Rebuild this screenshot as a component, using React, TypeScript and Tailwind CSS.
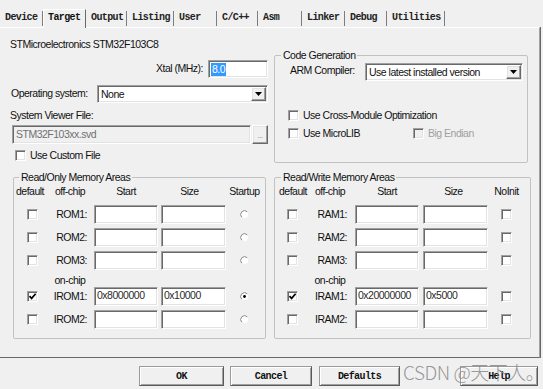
import React from "react";

const sunken =
  "border border-t-[#a0a0a0] border-l-[#a0a0a0] border-r-white border-b-white shadow-[inset_1px_1px_0_#696969,inset_-1px_-1px_0_#e3e3e3]";
const raised =
  "border border-t-white border-l-white border-r-[#696969] border-b-[#696969] shadow-[inset_-1px_-1px_0_#a0a0a0,inset_1px_1px_0_#e3e3e3]";

const tabs = [
  { label: "Device", w: "w-[43px]" },
  { label: "Target", w: "w-[43px]", active: true },
  { label: "Output", w: "w-[41px]" },
  { label: "Listing", w: "w-[47px]" },
  { label: "User", w: "w-[43px]" },
  { label: "C/C++", w: "w-[41px]" },
  { label: "Asm", w: "w-[44px]" },
  { label: "Linker", w: "w-[43px]" },
  { label: "Debug", w: "w-[42px]" },
  { label: "Utilities", w: "w-[58px]" },
];

function Check({ checked = false, disabled = false }: { checked?: boolean; disabled?: boolean }) {
  return (
    <div
      className={`w-[11px] h-[11px] shrink-0 flex items-center justify-center ${sunken} ${
        disabled ? "bg-[#f0f0f0]" : "bg-white"
      }`}
    >
      {checked && (
        <svg width="9" height="9" viewBox="0 0 9 9">
          <path d="M1.5 4.2 L3.6 6.4 L7.6 1.8" fill="none" stroke="#000" strokeWidth="1.7" />
        </svg>
      )}
    </div>
  );
}

function Radio({ checked = false }: { checked?: boolean }) {
  return (
    <svg width="9" height="9" viewBox="0 0 9 9">
      <circle cx="4.5" cy="4.5" r="3.6" fill="#fff" />
      <path d="M7.2 1.8 A3.8 3.8 0 0 0 1.8 7.2" fill="none" stroke="#8a8a8a" strokeWidth="1" />
      {checked && <circle cx="4.5" cy="4.5" r="1.4" fill="#000" />}
    </svg>
  );
}

function Field({ w, value }: { w: string; value?: string }) {
  return (
    <div className={`${w} h-[19px] bg-white ${sunken} pl-[2px] pt-[1px] leading-[13px] text-[#2a2a2a]`}>
      {value}
    </div>
  );
}

function Combo({ w, value }: { w: string; value: string }) {
  return (
    <div className={`${w} h-[18px] bg-white ${sunken} flex items-center`}>
      <span className="flex-1 pl-[3px] leading-[13px]">{value}</span>
      <div className={`w-[15px] h-[14px] mr-[1px] bg-[#f0f0f0] ${raised} flex items-center justify-center`}>
        <svg width="7" height="4" viewBox="0 0 7 4">
          <path d="M0 0 H7 L3.5 4 Z" fill="#000" />
        </svg>
      </div>
    </div>
  );
}

function Button({ label, cls }: { label: string; cls: string }) {
  return (
    <div
      className={`${cls} h-[20px] bg-[#f0f0f0] border border-t-[#9a9a9a] border-l-[#9a9a9a] border-r-[#5a5a5a] border-b-[#5a5a5a] shadow-[inset_1px_1px_0_#fff,inset_-1px_-1px_0_#a0a0a0] flex items-center justify-center font-['Liberation_Mono',monospace] text-[10px] font-bold tracking-[-0.6px] text-[#111]`}
    >
      {label}
    </div>
  );
}

const romRows = [
  { label: "ROM1:" },
  { label: "ROM2:" },
  { label: "ROM3:" },
];

export default function App() {
  return (
    <div className="relative w-[543px] h-[389px] overflow-hidden bg-[#f0f0f0] font-['Liberation_Sans',Arial,sans-serif] text-[10.5px] tracking-[-0.5px] text-[#111]">
      {/* tab strip */}
      <div className="flex items-end h-[27px]">
        {tabs.map((t) =>
          t.active ? (
            <div
              key={t.label}
              className={`${t.w} h-[19px] -mb-[1px] bg-[#f0f0f0] border-l border-l-white border-t border-t-white border-r border-r-[#696969] pl-[4px] pt-[1px] font-['Liberation_Mono',monospace] text-[10px] font-bold tracking-[-0.6px] leading-[14px] text-[#111]`}
            >
              {t.label}
            </div>
          ) : (
            <div
              key={t.label}
              className={`${t.w} h-[15px] mb-[1px] border-r border-r-[#7d7d7d] pl-[5px] font-['Liberation_Mono',monospace] text-[10px] font-bold tracking-[-0.6px] leading-[14px] text-[#222]`}
            >
              {t.label}
            </div>
          )
        )}
      </div>

      {/* panel */}
      <div className="w-[540px] h-[331px] border-t border-t-white border-r border-r-[#a0a0a0] border-b border-b-[#696969] shadow-[1px_0_0_#696969]">
        <div className="flex h-[143px]">
          <div className="w-[274px]">
            <div className="mt-[10px] pl-[10px] leading-[13px]">STMicroelectronics STM32F103C8</div>
            <div className="mt-[9px] flex items-center justify-end gap-[5px] w-[268px] h-[18px]">
              <span>Xtal (MHz):</span>
              <div className={`w-[60px] h-[18px] bg-white ${sunken} pl-[2px] flex items-center`}>
                <span className="bg-[#3399ff] text-white leading-[13px] px-[1px]">8.0</span>
              </div>
            </div>
            <div className="mt-[7px] flex items-center h-[18px]">
              <span className="w-[97px] pl-[11px]">Operating system:</span>
              <Combo w="w-[171px]" value="None" />
            </div>
            <div className="mt-[6px] pl-[10px] leading-[13px]">System Viewer File:</div>
            <div className="mt-[3px] flex pl-[12px] gap-[1px] h-[19px]">
              <div className={`w-[239px] h-[19px] bg-[#f0f0f0] ${sunken} pl-[3px] flex items-center text-[#707070]`}>
                STM32F103xx.svd
              </div>
              <div className={`w-[16px] h-[19px] ${raised} flex items-end justify-center pb-[3px] text-[8px] leading-[8px] text-[#8a8a8a]`}>
                ...
              </div>
            </div>
            <div className="mt-[5px] flex items-center pl-[15px] gap-[4px]">
              <Check />
              <span className="leading-[13px]">Use Custom File</span>
            </div>
          </div>

          <div className="w-[254px] pt-[21px]">
            <fieldset className="h-[114px] border border-[#c2c2c2] rounded-[2px]">
              <legend className="ml-[6px] px-[2px] leading-[12px]">Code Generation</legend>
              <div className="mt-[2px] flex items-center h-[18px]">
                <span className="w-[90px] pl-[15px] -mt-[2px]">ARM Compiler:</span>
                <Combo w="w-[158px]" value="Use latest installed version" />
              </div>
              <div className="mt-[27px] pl-[13px] flex items-center h-[15px] gap-[4px]">
                <Check />
                <span>Use Cross-Module Optimization</span>
              </div>
              <div className="mt-[3px] pl-[13px] flex items-center h-[15px]">
                <div className="w-[125px] flex items-center gap-[4px]">
                  <Check />
                  <span>Use MicroLIB</span>
                </div>
                <div className="flex items-center gap-[4px] text-[#a0a0a0]">
                  <Check disabled />
                  <span>Big Endian</span>
                </div>
              </div>
            </fieldset>
          </div>
        </div>

        <div className="flex">
          {/* Read/Only */}
          <fieldset className="ml-[13px] w-[253px] h-[168px] border border-[#c2c2c2] rounded-[2px]">
            <legend className="ml-[5px] px-[2px] leading-[12px]">Read/Only Memory Areas</legend>
            <div className="mt-[2px] flex leading-[13px]">
              <span className="w-[36px] pl-[2px]">default</span>
              <span className="w-[40px] text-center">off-chip</span>
              <span className="ml-[4px] w-[64px] text-center">Start</span>
              <span className="ml-[3px] w-[65px] text-center pr-[8px]">Size</span>
              <span className="w-[37px] text-center">Startup</span>
            </div>
            {romRows.map((r, i) => (
              <div key={r.label} className={`${i === 0 ? "mt-[7px]" : "mt-[4px]"} flex items-center h-[19px]`}>
                <div className="w-[36px] flex justify-center">
                  <Check />
                </div>
                <span className="w-[40px] text-right pr-[3px]">{r.label}</span>
                <div className="ml-[4px]">
                  <Field w="w-[64px]" />
                </div>
                <div className="ml-[3px]">
                  <Field w="w-[65px]" />
                </div>
                <div className="w-[37px] flex justify-center">
                  <Radio />
                </div>
              </div>
            ))}
            <div className="mt-[4px] flex leading-[13px]">
              <span className="w-[36px]" />
              <span className="w-[40px] text-center">on-chip</span>
            </div>
            <div className="flex items-center h-[19px]">
              <div className="w-[36px] flex justify-center">
                <Check checked />
              </div>
              <span className="w-[40px] text-right pr-[3px]">IROM1:</span>
              <div className="ml-[4px]">
                <Field w="w-[64px]" value="0x8000000" />
              </div>
              <div className="ml-[3px]">
                <Field w="w-[65px]" value="0x10000" />
              </div>
              <div className="w-[37px] flex justify-center">
                <Radio checked />
              </div>
            </div>
            <div className="mt-[4px] flex items-center h-[19px]">
              <div className="w-[36px] flex justify-center">
                <Check />
              </div>
              <span className="w-[40px] text-right pr-[3px]">IROM2:</span>
              <div className="ml-[4px]">
                <Field w="w-[64px]" />
              </div>
              <div className="ml-[3px]">
                <Field w="w-[65px]" />
              </div>
              <div className="w-[37px] flex justify-center">
                <Radio />
              </div>
            </div>
          </fieldset>

          {/* Read/Write */}
          <fieldset className="ml-[8px] w-[257px] h-[168px] border border-[#c2c2c2] rounded-[2px]">
            <legend className="ml-[6px] px-[2px] leading-[12px]">Read/Write Memory Areas</legend>
            <div className="mt-[2px] flex leading-[13px]">
              <span className="w-[35px] pl-[4px]">default</span>
              <span className="w-[40px] text-center">off-chip</span>
              <span className="ml-[5px] w-[64px] text-center">Start</span>
              <span className="ml-[4px] w-[65px] text-center pr-[4px]">Size</span>
              <span className="w-[37px] text-center">NoInit</span>
            </div>
            {["RAM1:", "RAM2:", "RAM3:"].map((label, i) => (
              <div key={label} className={`${i === 0 ? "mt-[7px]" : "mt-[4px]"} flex items-center h-[19px]`}>
                <div className="w-[35px] flex justify-center">
                  <Check />
                </div>
                <span className="w-[40px] text-right pr-[3px]">{label}</span>
                <div className="ml-[5px]">
                  <Field w="w-[64px]" />
                </div>
                <div className="ml-[4px]">
                  <Field w="w-[65px]" />
                </div>
                <div className="w-[37px] flex justify-center">
                  <Check />
                </div>
              </div>
            ))}
            <div className="mt-[4px] flex leading-[13px]">
              <span className="w-[35px]" />
              <span className="w-[40px] text-center">on-chip</span>
            </div>
            <div className="flex items-center h-[19px]">
              <div className="w-[35px] flex justify-center">
                <Check checked />
              </div>
              <span className="w-[40px] text-right pr-[3px]">IRAM1:</span>
              <div className="ml-[5px]">
                <Field w="w-[64px]" value="0x20000000" />
              </div>
              <div className="ml-[4px]">
                <Field w="w-[65px]" value="0x5000" />
              </div>
              <div className="w-[37px] flex justify-center">
                <Check />
              </div>
            </div>
            <div className="mt-[4px] flex items-center h-[19px]">
              <div className="w-[35px] flex justify-center">
                <Check />
              </div>
              <span className="w-[40px] text-right pr-[3px]">IRAM2:</span>
              <div className="ml-[5px]">
                <Field w="w-[64px]" />
              </div>
              <div className="ml-[4px]">
                <Field w="w-[65px]" />
              </div>
              <div className="w-[37px] flex justify-center">
                <Check />
              </div>
            </div>
          </fieldset>
        </div>
      </div>

      {/* dialog buttons */}
      <div className="flex pt-[8px]">
        <Button label="OK" cls="ml-[139px] w-[85px]" />
        <Button label="Cancel" cls="ml-[6px] w-[82px]" />
        <Button label="Defaults" cls="ml-[7px] w-[81px]" />
        <Button label="Help" cls="ml-[60px] w-[78px]" />
      </div>

      {/* watermark */}
      <div className="absolute left-[403px] top-[360px] font-['Noto_Sans_CJK_SC',sans-serif] font-light text-[19px] leading-[24px] tracking-[-0.5px] text-[#8c8c8c]/90 whitespace-nowrap">
        CSDN @天下人。
      </div>
    </div>
  );
}
